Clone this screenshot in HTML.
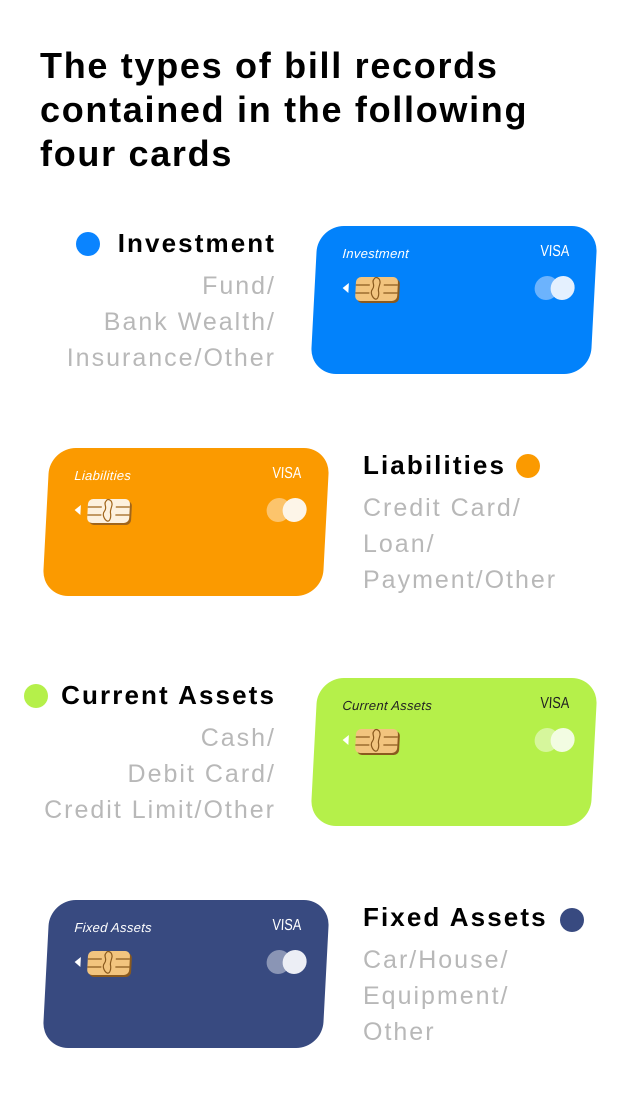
<!DOCTYPE html>
<html><head><meta charset="utf-8"><style>
*{margin:0;padding:0;box-sizing:border-box}
body{width:638px;height:1116px;background:#fff;position:relative;overflow:hidden;font-family:"Liberation Sans",sans-serif}
.t{position:absolute;left:40px;top:44px;font-size:36px;font-weight:bold;line-height:44px;color:#000;letter-spacing:1.7px}
.card{position:absolute;width:280px;height:148px;border-radius:26px;transform:skewX(-3deg)}
.card .l{position:absolute;left:26px;top:20px;font-size:13px;font-style:italic;color:#fff;letter-spacing:.3px}
.card .v{position:absolute;right:24px;top:17px;font-size:16px;color:#fff;transform:scaleX(.8)}
.card .a{position:absolute;left:28px;top:57px;width:0;height:0;border-top:5px solid transparent;border-bottom:5px solid transparent;border-right:6px solid #fff}
.card svg{position:absolute;left:40px;top:50px}
.c1,.c2{position:absolute;top:50px;width:24px;height:24px;border-radius:50%}
.c1{left:220px}.c2{left:236px}
.h{position:absolute;font-size:26px;font-weight:bold;color:#000;white-space:nowrap;letter-spacing:2.1px}
.g{position:absolute;font-size:25px;color:#b8b8b8;line-height:36px;white-space:nowrap;letter-spacing:2px}
.r{text-align:right}
.dot{position:absolute;width:24px;height:24px;border-radius:50%}
</style></head><body>
<div class="t">The types of bill records<br>contained in the following<br>four cards</div>

<div class="dot" style="left:76px;top:232px;background:#0a84ff"></div>
<div class="h r" style="right:362px;top:228px">Investment</div>
<div class="g r" style="right:362px;top:268px">Fund/<br>Bank Wealth/<br>Insurance/Other</div>
<div class="card" style="left:314px;top:226px;background:#0282fb">
<div class="l">Investment</div><div class="v">VISA</div><div class="a"></div>
<svg width="46" height="28" viewBox="0 0 46 28"><rect x="3" y="3" width="42" height="24" rx="5" fill="#8a5a1e"/><rect x="1" y="1" width="42" height="24" rx="5" fill="#f2c47e"/><path d="M1 9H15M1 17H15M29 9H43M29 17H43M19 3c-3 3 2 6-1 10s1 9 3 10c3 1 4-4 3-8s3-8 0-12c-2-2-4-2-5 0z" stroke="#8a5a1e" stroke-width="1.2" fill="none"/></svg>
<div class="c1" style="background:#6cb3fd"></div><div class="c2" style="background:#e4f0fe"></div>
</div>

<div class="card" style="left:46px;top:448px;background:#fb9a00">
<div class="l">Liabilities</div><div class="v">VISA</div><div class="a"></div>
<svg width="46" height="28" viewBox="0 0 46 28"><rect x="3" y="3" width="42" height="24" rx="5" fill="#a0651b"/><rect x="1" y="1" width="42" height="24" rx="5" fill="#fdf1de"/><path d="M1 9H15M1 17H15M29 9H43M29 17H43M19 3c-3 3 2 6-1 10s1 9 3 10c3 1 4-4 3-8s3-8 0-12c-2-2-4-2-5 0z" stroke="#a0651b" stroke-width="1.2" fill="none"/></svg>
<div class="c1" style="background:#fcc46c"></div><div class="c2" style="background:#fdf5e8"></div>
</div>
<div class="h" style="left:363px;top:450px">Liabilities</div>
<div class="dot" style="left:516px;top:454px;background:#fb9a00"></div>
<div class="g" style="left:363px;top:490px">Credit Card/<br>Loan/<br>Payment/Other</div>

<div class="dot" style="left:24px;top:684px;background:#b5f04a"></div>
<div class="h r" style="right:362px;top:680px">Current Assets</div>
<div class="g r" style="right:362px;top:720px">Cash/<br>Debit Card/<br>Credit Limit/Other</div>
<div class="card" style="left:314px;top:678px;background:#b5f04a">
<div class="l" style="color:#222">Current Assets</div><div class="v" style="color:#222">VISA</div><div class="a"></div>
<svg width="46" height="28" viewBox="0 0 46 28"><rect x="3" y="3" width="42" height="24" rx="5" fill="#8a5a1e"/><rect x="1" y="1" width="42" height="24" rx="5" fill="#f2c47e"/><path d="M1 9H15M1 17H15M29 9H43M29 17H43M19 3c-3 3 2 6-1 10s1 9 3 10c3 1 4-4 3-8s3-8 0-12c-2-2-4-2-5 0z" stroke="#8a5a1e" stroke-width="1.2" fill="none"/></svg>
<div class="c1" style="background:#d6f69c"></div><div class="c2" style="background:#f2fce2"></div>
</div>

<div class="card" style="left:46px;top:900px;background:#384a80">
<div class="l">Fixed Assets</div><div class="v">VISA</div><div class="a"></div>
<svg width="46" height="28" viewBox="0 0 46 28"><rect x="3" y="3" width="42" height="24" rx="5" fill="#8a5a1e"/><rect x="1" y="1" width="42" height="24" rx="5" fill="#f2c47e"/><path d="M1 9H15M1 17H15M29 9H43M29 17H43M19 3c-3 3 2 6-1 10s1 9 3 10c3 1 4-4 3-8s3-8 0-12c-2-2-4-2-5 0z" stroke="#8a5a1e" stroke-width="1.2" fill="none"/></svg>
<div class="c1" style="background:#8a95b5"></div><div class="c2" style="background:#eceef5"></div>
</div>
<div class="h" style="left:363px;top:902px">Fixed Assets</div>
<div class="dot" style="left:560px;top:908px;background:#384a80"></div>
<div class="g" style="left:363px;top:942px">Car/House/<br>Equipment/<br>Other</div>
</body></html>
